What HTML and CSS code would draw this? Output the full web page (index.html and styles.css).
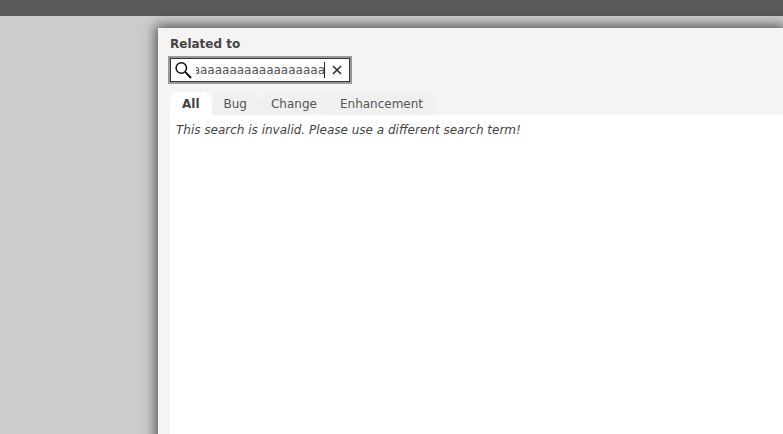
FILE: index.html
```html
<!DOCTYPE html>
<html lang="en">
<head>
  <meta charset="UTF-8">
  <meta name="viewport" content="width=device-width, initial-scale=1.0">
  <title>Related to</title>
  <link rel="stylesheet" href="styles.css">
</head>
<body>
  <div class="topbar"></div>
  <div class="main">
    <div class="panel">
      <div class="panel-label">Related to</div>
      <div class="search-box">
        <svg class="search-icon" width="18" height="18" viewBox="0 0 18 18">
          <circle cx="6.3" cy="7" r="5.2" fill="none" stroke="#111" stroke-width="1.5"/>
          <path d="M10.2 10.9 L16 17" stroke="#111" stroke-width="2" fill="none"/>
        </svg>
        <div class="search-text"><span>aaaaaaaaaaaaaaaaaaaa</span></div>
        <div class="caret"></div>
        <svg class="clear-icon" width="10" height="10" viewBox="0 0 10 10">
          <path d="M1 1 L9 9 M9 1 L1 9" stroke="#333" stroke-width="1.7" fill="none"/>
        </svg>
      </div>
      <div class="tabs">
        <div class="tab active">All</div>
        <div class="tab">Bug</div>
        <div class="tab">Change</div>
        <div class="tab">Enhancement</div>
      </div>
      <div class="results">
        <em>This search is invalid. Please use a different search term!</em>
      </div>
    </div>
  </div>
</body>
</html>
```

FILE: styles.css
```css
html, body {
  height: 100%;
}

body {
  margin: 0;
  background-color: #cccccc;
  font-family: "DejaVu Sans", sans-serif;
  font-size: 12px;
  color: #444;
  overflow: hidden;
}

.topbar {
  height: 16px;
  background-color: #5a5a5a;
}

.main {
  padding: 12px 0 0 158px;
  height: 406px;
}

.panel {
  height: 100%;
  padding: 9px 0 0 12px;
  background-color: #f4f4f4;
  box-shadow: 0 0 12px 2px rgba(0, 0, 0, 0.65);
  display: flex;
  flex-direction: column;
}

.panel-label {
  font-weight: bold;
  line-height: 14px;
  margin-bottom: 7px;
}

.search-box {
  width: 178px;
  height: 22px;
  border: 1px solid #333;
  outline: 2px solid #999;
  background-color: #fff;
  display: flex;
  align-items: center;
  color: #555;
}

.search-icon {
  margin-left: 4px;
  flex: none;
}

.search-text {
  width: 129px;
  margin-left: 3px;
  overflow: hidden;
  display: flex;
  justify-content: flex-end;
  white-space: nowrap;
  flex: none;
}

.caret {
  width: 1px;
  height: 16px;
  margin-left: -1px;
  background-color: #222;
  flex: none;
}

.clear-icon {
  margin-left: 7px;
  flex: none;
}

.tabs {
  display: flex;
  margin-top: 10px;
  height: 23px;
}

.tab {
  padding: 2px 12px 0;
  line-height: 21px;
  background-color: #f0f0f0;
  border-radius: 9px 9px 0 0;
  color: #555;
}

.tab:last-child {
  margin-left: -1px;
}

.tab.active {
  background-color: #fff;
  font-weight: bold;
  color: #444;
}

.results {
  flex: 1;
  background-color: #fff;
  padding: 8px 6px;
  line-height: 15px;
}
```
